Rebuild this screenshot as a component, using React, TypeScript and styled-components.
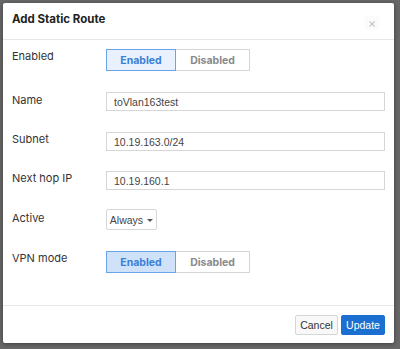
import styled, { createGlobalStyle } from 'styled-components'

const GlobalStyle = createGlobalStyle`
    html, body {
        margin: 0;
        padding: 0;
        background: #676767;
    }
    body {
        font-family: Inter, "Noto Sans", sans-serif;
    }
`

const Backdrop = styled.div`
    width: 400px;
    height: 349px;
    padding: 3px 6px 6px 3px;
    box-sizing: border-box;
`

const Modal = styled.div`
    background: #fff;
    height: 340px;
    border-radius: 2px;
    display: flex;
    flex-direction: column;
    box-shadow: 0 1px 4px rgba(0, 0, 0, 0.4);
`

const Header = styled.div`
    height: 36px;
    border-bottom: 1px solid #e6e6e6;
    display: flex;
    align-items: center;
    justify-content: space-between;
    padding: 0 15px 0 9px;
`

const Title = styled.h3`
    margin: 0 0 4px 0;
    font-size: 11.5px;
    font-weight: 700;
    color: #222;
`

const Close = styled.span`
    width: 14px;
    height: 14px;
    display: flex;
    align-items: center;
    justify-content: center;
    font-size: 13px;
    color: #c4c4c4;
    background: #fbfbfb;
    margin-top: 4px;
`

const Body = styled.div`
    flex: 1;
    padding: 9px 9px 0 9px;
    display: flex;
    flex-direction: column;
`

const Row = styled.div<{ $height: number }>`
    display: flex;
    height: ${(p) => p.$height}px;
`

const Label = styled.div<{ $top?: number }>`
    width: 94px;
    font-size: 11px;
    color: #333;
    padding-top: ${(p) => p.$top ?? 0}px;
`

const Toggle = styled.div`
    display: flex;
    height: 22px;
`

const ToggleButton = styled.div<{ $active?: boolean; $tint: string }>`
    width: ${(p) => (p.$active ? 70 : 74)}px;
    box-sizing: border-box;
    display: flex;
    align-items: center;
    justify-content: center;
    font-size: 10.5px;
    font-weight: 700;
    color: ${(p) => (p.$active ? '#3a7fd6' : '#8a8a8a')};
    background: ${(p) => (p.$active ? p.$tint : '#fff')};
    border: 1px solid ${(p) => (p.$active ? '#6aa3e8' : '#d4d4d4')};
    ${(p) => (p.$active ? '' : 'border-left: none;')}
`

const Input = styled.input`
    width: 279px;
    height: 19px;
    box-sizing: border-box;
    border: 1px solid #d6d6d6;
    padding: 0 7px;
    font-family: "Liberation Sans", Arial, sans-serif;
    font-size: 10.5px;
    color: #444;
    outline: none;
`

const Dropdown = styled.div`
    width: 51px;
    height: 21px;
    box-sizing: border-box;
    border: 1px solid #d6d6d6;
    border-radius: 2px;
    display: flex;
    align-items: center;
    justify-content: center;
    gap: 4px;
    font-family: "Liberation Sans", Arial, sans-serif;
    font-size: 10.5px;
    color: #444;
`

const Caret = styled.span`
    width: 0;
    height: 0;
    border-left: 3px solid transparent;
    border-right: 3px solid transparent;
    border-top: 3px solid #555;
    margin-top: 1px;
`

const Footer = styled.div`
    height: 37px;
    border-top: 1px solid #e8e8e8;
    display: flex;
    align-items: center;
    justify-content: flex-end;
    gap: 3px;
    padding: 0 9px 0 0;
`

const Button = styled.button<{ $primary?: boolean }>`
    height: 20px;
    width: ${(p) => (p.$primary ? 44 : 43)}px;
    padding: 0;
    box-sizing: border-box;
    border-radius: 2px;
    font-family: "Liberation Sans", Arial, sans-serif;
    font-size: 10.5px;
    border: 1px solid ${(p) => (p.$primary ? '#1a6fd0' : '#d6d6d6')};
    background: ${(p) => (p.$primary ? '#1a6fd0' : '#f8f8f8')};
    color: ${(p) => (p.$primary ? '#fff' : '#333')};
`

export default function App() {
    return (
        <Backdrop>
            <GlobalStyle />
            <Modal>
                <Header>
                    <Title>Add Static Route</Title>
                    <Close>×</Close>
                </Header>
                <Body>
                    <Row $height={43}>
                        <Label>Enabled</Label>
                        <Toggle>
                            <ToggleButton $active $tint="#e8f1fd">
                                Enabled
                            </ToggleButton>
                            <ToggleButton $tint="#e8f1fd">Disabled</ToggleButton>
                        </Toggle>
                    </Row>
                    <Row $height={40}>
                        <Label $top={1}>Name</Label>
                        <Input defaultValue="toVlan163test" />
                    </Row>
                    <Row $height={39}>
                        <Label $top={0}>Subnet</Label>
                        <Input defaultValue="10.19.163.0/24" />
                    </Row>
                    <Row $height={38}>
                        <Label $top={0}>Next hop IP</Label>
                        <Input defaultValue="10.19.160.1" />
                    </Row>
                    <Row $height={42}>
                        <Label $top={2}>Active</Label>
                        <Dropdown>
                            Always <Caret />
                        </Dropdown>
                    </Row>
                    <Row $height={40}>
                        <Label $top={0}>VPN mode</Label>
                        <Toggle>
                            <ToggleButton $active $tint="#cfe2fa">
                                Enabled
                            </ToggleButton>
                            <ToggleButton $tint="#cfe2fa">Disabled</ToggleButton>
                        </Toggle>
                    </Row>
                </Body>
                <Footer>
                    <Button>Cancel</Button>
                    <Button $primary>Update</Button>
                </Footer>
            </Modal>
        </Backdrop>
    )
}
